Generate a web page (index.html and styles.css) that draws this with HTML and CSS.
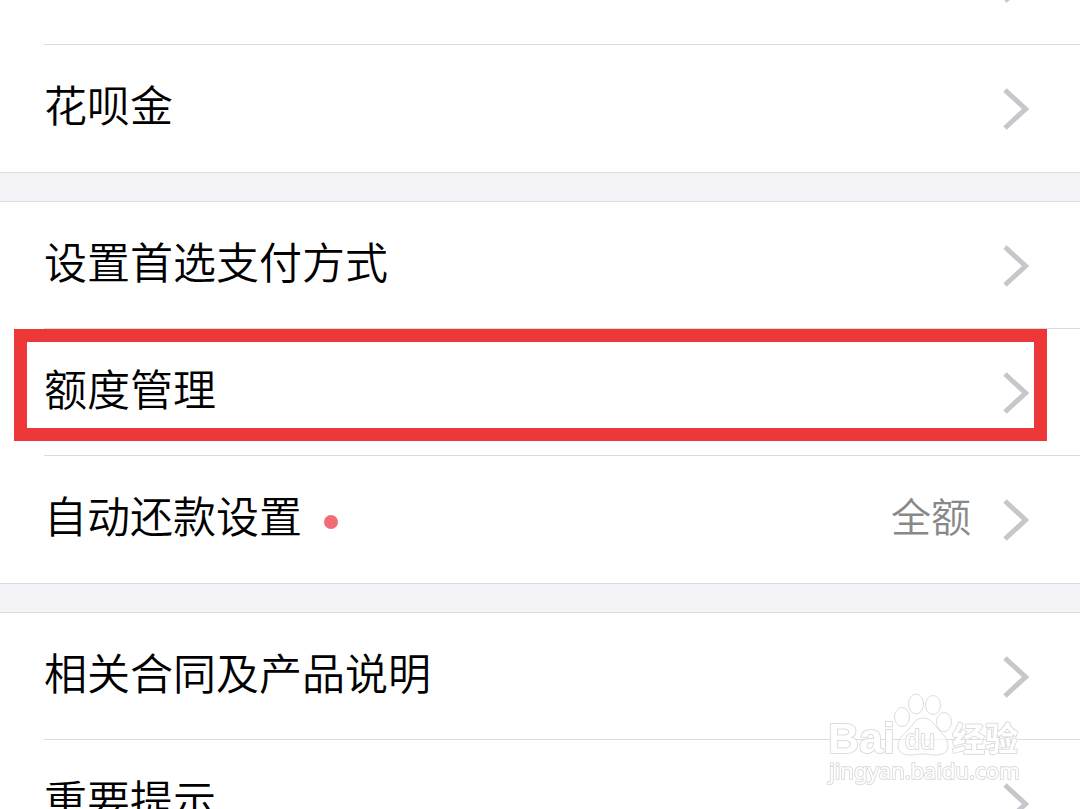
FILE: index.html
```html
<!DOCTYPE html>
<html lang="zh-CN">
<head>
    <meta charset="UTF-8">
    <meta name="viewport" content="width=device-width, initial-scale=1.0">
    <title>花呗设置</title>
    <link rel="stylesheet" href="styles.css">
</head>
<body>

    <svg class="defs" aria-hidden="true">
        <symbol id="chevron" viewBox="0 0 26 42">
            <path d="M2 2 L22.5 21 L2 40" />
        </symbol>
    </svg>

    <main class="settings">
        <section class="group">
            <a class="row" href="#">
                <svg class="chevron"><use href="#chevron" /></svg>
            </a>
            <a class="row" href="#">
                <span class="label">花呗金</span>
                <svg class="chevron"><use href="#chevron" /></svg>
            </a>
        </section>

        <section class="group">
            <a class="row" href="#">
                <span class="label">设置首选支付方式</span>
                <svg class="chevron"><use href="#chevron" /></svg>
            </a>
            <a class="row marked" href="#">
                <span class="label">额度管理</span>
                <svg class="chevron"><use href="#chevron" /></svg>
            </a>
            <a class="row" href="#">
                <span class="label">自动还款设置</span>
                <span class="dot"></span>
                <span class="value">全额</span>
                <svg class="chevron"><use href="#chevron" /></svg>
            </a>
        </section>

        <section class="group">
            <a class="row" href="#">
                <span class="label">相关合同及产品说明</span>
                <svg class="chevron"><use href="#chevron" /></svg>
            </a>
            <a class="row" href="#">
                <span class="label">重要提示</span>
                <svg class="chevron"><use href="#chevron" /></svg>
            </a>
        </section>
    </main>

    <svg class="watermark" viewBox="0 0 200 100">
        <text class="brand" x="2" y="63">Bai</text>
        <ellipse cx="76" cy="27" rx="7.5" ry="9.5" />
        <ellipse cx="90" cy="14" rx="7.5" ry="10" />
        <ellipse cx="107" cy="15" rx="7.5" ry="9.5" />
        <ellipse cx="118" cy="32" rx="7.5" ry="9.5" />
        <path d="M97 28 C105 28 108 35 113 40 C118 45 122 49 122 56 C122 62 117 65 110 65 C105 65 102 64 97 64 C92 64 89 65 84 65 C77 65 72 62 72 56 C72 49 77 45 82 40 C87 35 89 28 97 28 Z" />
        <text class="du" x="79" y="59">du</text>
        <text class="jingyan" x="126" y="61">经验</text>
        <text class="site" x="3" y="89">jingyan.baidu.com</text>
    </svg>

</body>
</html>
```

FILE: styles.css
```css
* {
    margin: 0;
    padding: 0;
    box-sizing: border-box;
}

body {
    font-family: "Noto Sans CJK SC", sans-serif;
    height: 100vh;
    overflow: hidden;
    background-color: #f3f3f8;
    color: #000;
}

.defs {
    position: absolute;
    width: 0;
    height: 0;
}

/* list is scrolled part of a row down */
.settings {
    display: flex;
    flex-direction: column;
    gap: 28px;
    margin-top: -83px;
}

.group {
    background-color: #fff;
    border-top: 1px solid #dcdcde;
    border-bottom: 1px solid #dcdcde;
}

.row {
    position: relative;
    display: flex;
    align-items: center;
    height: 127px;
    margin-left: 44px;
    padding-right: 51px;
    border-bottom: 1px solid #dcdcde;
    color: inherit;
    text-decoration: none;
}

.row:last-child {
    border-bottom-color: transparent;
}

.label {
    font-size: 43px;
    font-weight: 350;
    line-height: 60px;
    padding-bottom: 10px;
}

.dot {
    width: 14px;
    height: 14px;
    margin: 6px 0 0 22px;
    border-radius: 50%;
    background-color: #f16d76;
}

.value {
    margin-left: auto;
    margin-right: 32px;
    padding-bottom: 8px;
    font-size: 40px;
    font-weight: 350;
    line-height: 60px;
    color: #888;
}

.chevron {
    flex: none;
    width: 26px;
    height: 42px;
    margin-top: 1px;
    margin-left: auto;
    overflow: visible;
    fill: none;
    stroke: #c7c7cb;
    stroke-width: 5;
}

.value + .chevron {
    margin-left: 0;
}

.marked::after {
    content: "";
    position: absolute;
    top: 0;
    left: -30px;
    right: 33px;
    box-sizing: border-box;
    height: 112px;
    border: 13px solid #ee3739;
}

.watermark {
    position: fixed;
    right: 54px;
    bottom: 19px;
    width: 200px;
    height: 100px;
    fill: rgba(255, 255, 255, 0.6);
    stroke: #dcdcdc;
    stroke-width: 1;
    stroke-linejoin: round;
}

.watermark text {
    font-family: "Liberation Sans", "Noto Sans CJK SC", sans-serif;
    paint-order: stroke;
    stroke-width: 2;
    fill: #fff;
}

.watermark .brand {
    font-size: 43px;
    font-weight: bold;
}

.watermark .du {
    font-size: 27px;
}

.watermark .jingyan {
    font-size: 33px;
    font-weight: bold;
}

.watermark .site {
    font-family: "Noto Sans", sans-serif;
    font-size: 22px;
}
```
